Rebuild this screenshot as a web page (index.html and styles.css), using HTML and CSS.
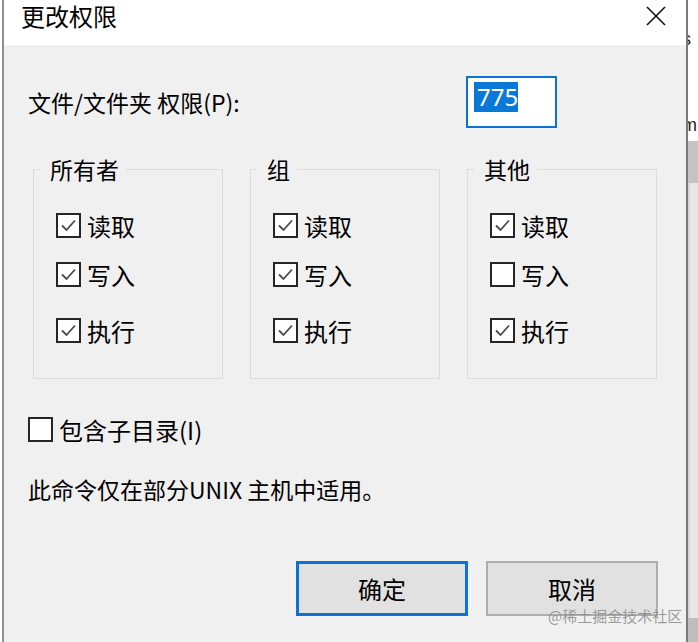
FILE: index.html
```html
<!doctype html>
<html lang="zh-CN">
<head>
    <meta charset="utf-8">
    <title>更改权限</title>
    <link rel="stylesheet" href="styles.css">
</head>
<body>
<div class="screen">
    <div class="window">
        <div class="titlebar">
            <span class="title">更改权限</span>
            <svg class="close" width="22" height="20" viewBox="0 0 22 20">
                <path d="M2 1 L20 19 M20 1 L2 19" stroke="#111" stroke-width="1.6" fill="none"/>
            </svg>
        </div>
        <div class="content">
            <div class="perm-row">
                <span class="label">文件/文件夹 权限(P):</span>
                <div class="perm-input"><span class="sel">775</span></div>
            </div>

            <div class="groups">
                <fieldset class="group">
                    <legend>所有者</legend>
                    <div class="check"><span class="box on"><svg viewBox="0 0 21 21"><path d="M4 10.5 L8.5 15 L17 5.5"/></svg></span>读取</div>
                    <div class="check"><span class="box on"><svg viewBox="0 0 21 21"><path d="M4 10.5 L8.5 15 L17 5.5"/></svg></span>写入</div>
                    <div class="check exec"><span class="box on"><svg viewBox="0 0 21 21"><path d="M4 10.5 L8.5 15 L17 5.5"/></svg></span>执行</div>
                </fieldset>
                <fieldset class="group">
                    <legend>组</legend>
                    <div class="check"><span class="box on"><svg viewBox="0 0 21 21"><path d="M4 10.5 L8.5 15 L17 5.5"/></svg></span>读取</div>
                    <div class="check"><span class="box on"><svg viewBox="0 0 21 21"><path d="M4 10.5 L8.5 15 L17 5.5"/></svg></span>写入</div>
                    <div class="check exec"><span class="box on"><svg viewBox="0 0 21 21"><path d="M4 10.5 L8.5 15 L17 5.5"/></svg></span>执行</div>
                </fieldset>
                <fieldset class="group">
                    <legend>其他</legend>
                    <div class="check"><span class="box on"><svg viewBox="0 0 21 21"><path d="M4 10.5 L8.5 15 L17 5.5"/></svg></span>读取</div>
                    <div class="check"><span class="box"></span>写入</div>
                    <div class="check exec"><span class="box on"><svg viewBox="0 0 21 21"><path d="M4 10.5 L8.5 15 L17 5.5"/></svg></span>执行</div>
                </fieldset>
            </div>

            <div class="check subdir"><span class="box"></span>包含子目录(I)</div>

            <p class="note">此命令仅在部分UNIX 主机中适用。</p>

            <div class="buttons">
                <button class="btn default">确定</button>
                <button class="btn">取消</button>
            </div>
        </div>
        <span class="watermark">@稀土掘金技术社区</span>
    </div>
    <div class="behind">
        <div class="behind-top">
            <span class="frag frag-s">s</span>
            <span class="frag frag-m">m</span>
        </div>
        <div class="behind-thumb"></div>
        <div class="behind-track"></div>
        <div class="behind-foot"></div>
    </div>
</div>
</body>
</html>
```

FILE: styles.css
```css
html, body {
    margin: 0;
    padding: 0;
    background: #ffffff;
}
body {
    width: 698px;
    height: 642px;
    overflow: hidden;
    font-family: "Noto Sans CJK SC", "Noto Sans", sans-serif;
    color: #000;
}
.screen {
    display: flex;
    height: 642px;
}

/* окно диалога */
.window {
    position: relative;
    margin-left: 2px;
    width: 682px;
    border-left: 2px solid #8e8e8e;
    border-right: 2px solid #7a7a7a;
    background: #f0f0f0;
    display: flex;
    flex-direction: column;
}
.titlebar {
    height: 45px;
    background: #ffffff;
    display: flex;
    align-items: flex-start;
    justify-content: space-between;
    padding: 0 19px 0 17px;
}
.title {
    font-size: 24px;
    line-height: 32px;
}
.close {
    margin-top: 6px;
}

.content {
    padding: 31px 0 0 24px;
}
.perm-row {
    display: flex;
    align-items: center;
}
.label {
    width: 438px;
    font-size: 23px;
    line-height: 30px;
}
.perm-input {
    box-sizing: border-box;
    width: 91px;
    height: 52px;
    border: 2px solid #0a74d6;
    background: #fff;
    padding: 4px 0 0 6px;
}
.sel {
    display: inline-block;
    width: 44px;
    height: 30px;
    background: #0a78d7;
    color: #fff;
    font-family: "Noto Sans", sans-serif;
    font-size: 24px;
    line-height: 30px;
    text-indent: 3px;
}

/* группы флажков */
.groups {
    display: flex;
    justify-content: space-between;
    width: 624px;
    margin-top: 26px;
    margin-left: 5px;
}
.group {
    box-sizing: border-box;
    width: 190px;
    min-width: 0;
    margin: 0;
    padding: 29px 0 35px 22px;
    border: 1px solid #dcdcdc;
}
.group legend {
    font-size: 23px;
    line-height: 30px;
    padding: 0 7px 0 10px;
    margin-left: -16px;
}
.check {
    display: flex;
    align-items: center;
    gap: 6px;
    height: 25px;
    font-size: 24px;
    line-height: 30px;
}
.check + .check {
    margin-top: 24px;
}
.check.exec {
    margin-top: 31px;
}
.box {
    box-sizing: border-box;
    width: 25px;
    height: 25px;
    border: 2px solid #262626;
    background: #fff;
    flex: none;
}
.box svg {
    display: block;
    width: 21px;
    height: 21px;
}
.box svg path {
    fill: none;
    stroke: #4a4a4a;
    stroke-width: 1.8;
}

.subdir {
    margin-top: 38px;
}
.note {
    margin: 32px 0 0 0;
    font-size: 23px;
    line-height: 30px;
}

.buttons {
    display: flex;
    gap: 18px;
    margin: 57px 0 0 268px;
}
.btn {
    box-sizing: border-box;
    width: 172px;
    height: 55px;
    background: #e1e1e1;
    border: 2px solid #adadad;
    font-family: "Noto Sans CJK SC", sans-serif;
    font-size: 24px;
    color: #000;
    padding: 0;
}
.btn.default {
    border: 3px solid #0a74d6;
}

.watermark {
    position: absolute;
    left: 544px;
    top: 606px;
    white-space: nowrap;
    font-size: 15px;
    line-height: 20px;
    color: rgba(140, 140, 140, 0.85);
}

/* фон позади окна */
.behind {
    width: 10px;
    display: flex;
    flex-direction: column;
    overflow: hidden;
}
.behind-top {
    height: 141px;
    background: #fff;
    position: relative;
}
.frag {
    position: absolute;
    left: -6px;
    font-family: "Liberation Sans", sans-serif;
    font-size: 18px;
    line-height: 18px;
    color: #222;
}
.frag-s { top: 30px; }
.frag-m { top: 116px; }
.behind-thumb {
    height: 42px;
    background: #c4c4c4;
}
.behind-track {
    flex: 1;
    background: #e8e8e8;
    border-left: 2px solid #d8d8d8;
}
.behind-foot {
    height: 24px;
    background: #bdbdbd;
}
```
